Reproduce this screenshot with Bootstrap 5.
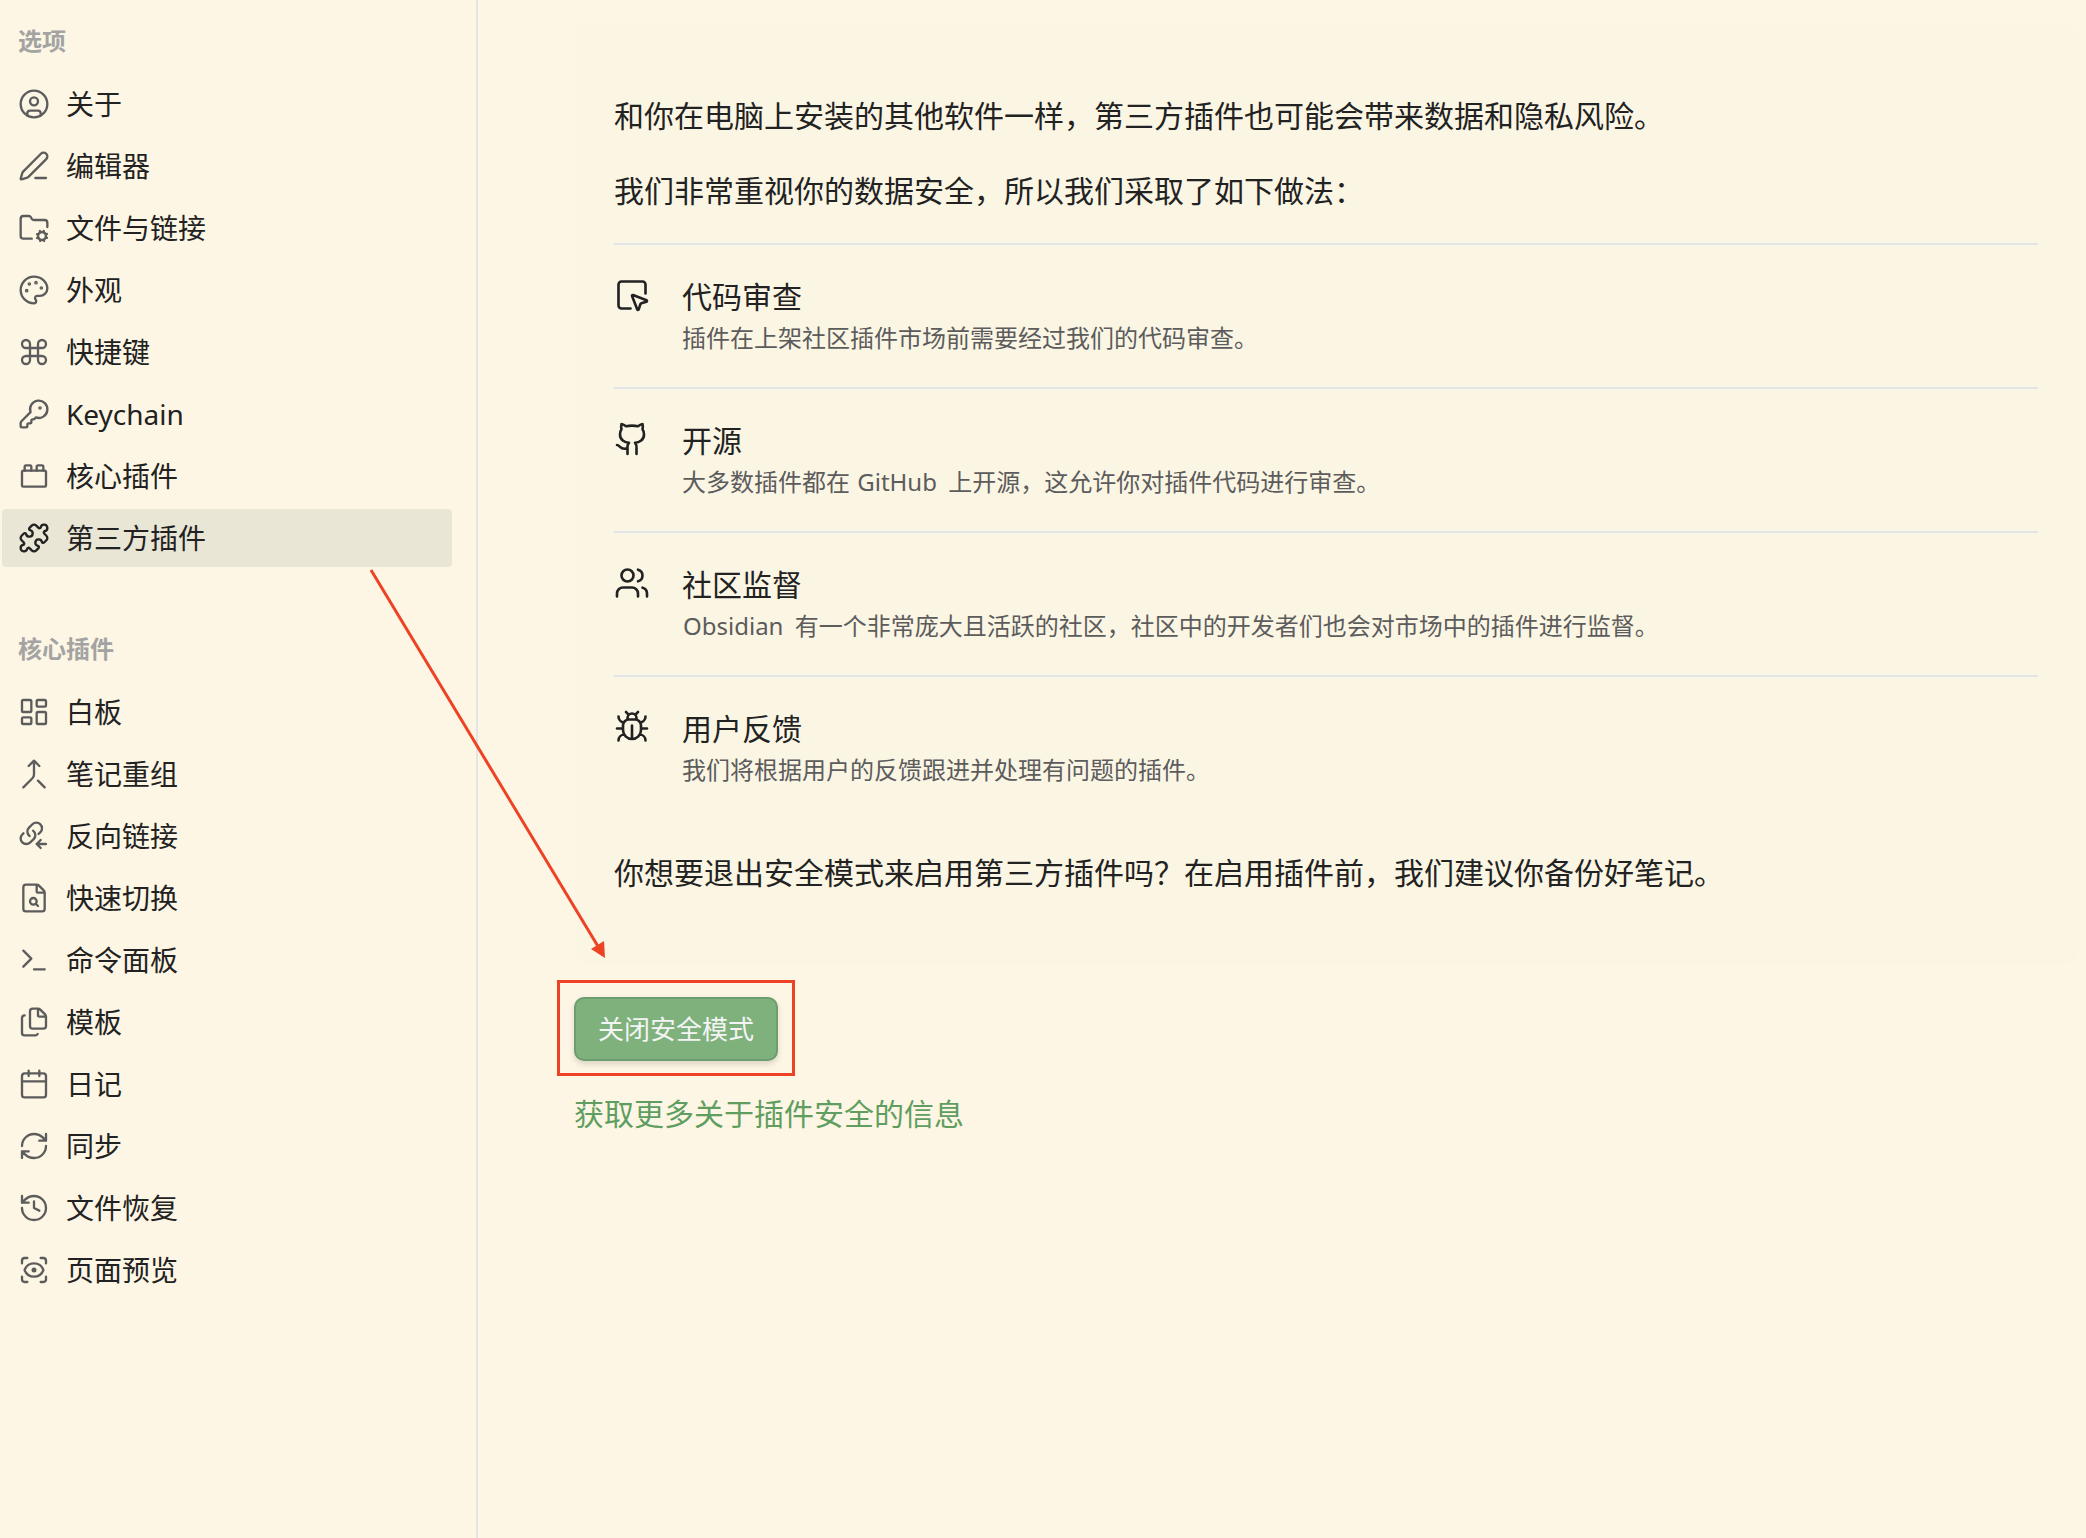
<!DOCTYPE html>
<html lang="zh-CN">
<head>
<meta charset="utf-8">
<meta name="viewport" content="width=device-width, initial-scale=1">
<title>第三方插件</title>
<link href="https://cdn.jsdelivr.net/npm/bootstrap@5.3.0/dist/css/bootstrap.min.css" rel="stylesheet">
<style>
  :root { --page: #fdf6e4; --panel: #fbf5e4; --line: #e2e4e6; --ink: #222; --soft: #5c5c5c; --faint: #a3a3a3; --mark: #ed4224; }
  body { background: var(--page); color: var(--ink); font-family: "Noto Sans", "Noto Sans CJK SC", sans-serif; font-size: 30px; line-height: 45px; }
  svg.ico { fill: none; stroke: currentColor; stroke-width: 1.75; stroke-linecap: round; stroke-linejoin: round; flex: none; width: 32px; height: 32px; }
  .side-pane { width: 478px; border-right: 2px solid var(--line); padding: 23px 24px 0 2px; }
  .side-title { font-size: 24px; line-height: 36px; font-weight: 700; color: var(--faint); margin: 0 0 16px; padding-left: 16px; }
  .side-group + .side-group { margin-top: 64px; }
  .side-item { font-size: 28px; line-height: 42px; padding: 8px 16px; gap: 16px; border-radius: 4px; color: var(--ink); }
  .side-item .ico { color: var(--soft); }
  .side-item.active { background: #e9e6d6; }
  .side-item.active .ico { color: var(--ink); }
  .main-pane { padding: 23px 8px 0 96px; }
  .notice { background: var(--panel); border-radius: 16px; padding: 70px 40px; }
  .notice > p { margin: 0 0 30px; }
  .notice > p:last-child { margin: 31px 0 0; }
  .measure { border-top: 2px solid var(--line); padding: 30px 0; gap: 32px; }
  .measure .ico { width: 36px; height: 36px; margin-top: 2px; }
  .measure h2 { font-size: 30px; line-height: 44px; font-weight: 400; margin: 0; }
  .measure p { font-size: 24px; line-height: 38px; color: var(--soft); margin: 0; }
  .latin { margin: 0 5px 0 1px; }
  .cta-wrap { margin-top: 32px; }
  .cta { font-size: 26px; line-height: 40px; padding: 10px 22px; border: 2px solid #6c9d6e; border-radius: 10px; background: #7fb17d; color: #f4f4f4; box-shadow: 0 3px 6px rgba(0,0,0,.14); }
  .cta:hover { background: #74a873; border-color: #6c9d6e; color: #fff; }
  .frame { inset: -17px -17px -15px; border: 3px solid var(--mark); pointer-events: none; }
  .more-link { color: #5f9e60; margin-top: 30px; }
  .arrow { left: 0; top: 0; pointer-events: none; }
</style>
</head>
<body>
<div class="d-flex min-vh-100 position-relative">
  <nav class="side-pane flex-shrink-0">
    <section class="side-group">
      <h6 class="side-title">选项</h6>
      <div class="d-flex flex-column gap-1">
        <a href="#" class="side-item d-flex align-items-center text-decoration-none"><svg class="ico" viewBox="0 0 24 24"><circle cx="12" cy="12" r="10"/><circle cx="12" cy="10" r="3"/><path d="M7 20.662V19a2 2 0 0 1 2-2h6a2 2 0 0 1 2 2v1.662"/></svg>关于</a>
        <a href="#" class="side-item d-flex align-items-center text-decoration-none"><svg class="ico" viewBox="0 0 24 24"><path d="M13 21h8M21.174 6.812a1 1 0 0 0-3.986-3.987L3.842 16.174a2 2 0 0 0-.5.83l-1.321 4.352a.5.5 0 0 0 .623.622l4.353-1.32a2 2 0 0 0 .83-.497z"/></svg>编辑器</a>
        <a href="#" class="side-item d-flex align-items-center text-decoration-none"><svg class="ico" viewBox="0 0 24 24"><circle cx="18" cy="18" r="3"/><path d="M10.3 20H4a2 2 0 0 1-2-2V5a2 2 0 0 1 2-2h3.98a2 2 0 0 1 1.69.9l.66 1.2A2 2 0 0 0 12 6h8a2 2 0 0 1 2 2v3.3M21.7 19.4l-.9-.3M15.2 16.9l-.9-.3M16.6 21.7l.3-.9M19.1 15.2l.3-.9M19.6 21.7l-.4-1M16.8 15.3l-.4-1M14.3 19.6l1-.4M20.7 16.8l1-.4"/></svg>文件与链接</a>
        <a href="#" class="side-item d-flex align-items-center text-decoration-none"><svg class="ico" viewBox="0 0 24 24"><g fill="currentColor"><circle cx="13.5" cy="6.5" r=".5"/><circle cx="17.5" cy="10.5" r=".5"/><circle cx="8.5" cy="7.5" r=".5"/><circle cx="6.5" cy="12.5" r=".5"/></g><path d="M12 2C6.5 2 2 6.5 2 12s4.5 10 10 10c.926 0 1.648-.746 1.648-1.688 0-.437-.18-.835-.437-1.125-.29-.289-.438-.652-.438-1.125a1.64 1.64 0 0 1 1.668-1.668h1.996c3.051 0 5.555-2.503 5.555-5.554C21.965 6.012 17.461 2 12 2z"/></svg>外观</a>
        <a href="#" class="side-item d-flex align-items-center text-decoration-none"><svg class="ico" viewBox="0 0 24 24"><path d="M15 6v12a3 3 0 1 0 3-3H6a3 3 0 1 0 3 3V6a3 3 0 1 0-3 3h12a3 3 0 1 0-3-3"/></svg>快捷键</a>
        <a href="#" class="side-item d-flex align-items-center text-decoration-none"><svg class="ico" viewBox="0 0 24 24"><path d="M2.586 17.414A2 2 0 0 0 2 18.828V21a1 1 0 0 0 1 1h3a1 1 0 0 0 1-1v-1a1 1 0 0 1 1-1h1a1 1 0 0 0 1-1v-1a1 1 0 0 1 1-1h.172a2 2 0 0 0 1.414-.586l.814-.814a6.5 6.5 0 1 0-4-4z"/><circle cx="16.5" cy="7.5" r=".5" fill="currentColor"/></svg>Keychain</a>
        <a href="#" class="side-item d-flex align-items-center text-decoration-none"><svg class="ico" viewBox="0 0 24 24"><rect x="3" y="8" width="18" height="12" rx="1"/><path d="M10 8V5c0-.6-.4-1-1-1H6a1 1 0 0 0-1 1v3M19 8V5c0-.6-.4-1-1-1h-3a1 1 0 0 0-1 1v3"/></svg>核心插件</a>
        <a href="#" class="side-item active d-flex align-items-center text-decoration-none" aria-current="page"><svg class="ico" viewBox="0 0 24 24"><path d="M15.39 4.39a1 1 0 0 0 1.68-.474 2.5 2.5 0 1 1 3.014 3.015 1 1 0 0 0-.474 1.68l1.683 1.682a2.414 2.414 0 0 1 0 3.414L19.61 15.39a1 1 0 0 1-1.68-.474 2.5 2.5 0 1 0-3.014 3.015 1 1 0 0 1 .474 1.68l-1.683 1.682a2.414 2.414 0 0 1-3.414 0L8.61 19.61a1 1 0 0 0-1.68.474 2.5 2.5 0 1 1-3.014-3.015 1 1 0 0 0 .474-1.68l-1.683-1.682a2.414 2.414 0 0 1 0-3.414L4.39 8.61a1 1 0 0 1 1.68.474 2.5 2.5 0 1 0 3.014-3.015 1 1 0 0 1-.474-1.68l1.683-1.682a2.414 2.414 0 0 1 3.414 0z"/></svg>第三方插件</a>
      </div>
    </section>
    <section class="side-group">
      <h6 class="side-title">核心插件</h6>
      <div class="d-flex flex-column gap-1">
        <a href="#" class="side-item d-flex align-items-center text-decoration-none"><svg class="ico" viewBox="0 0 24 24"><rect x="3" y="3" width="7" height="9" rx="1"/><rect x="14" y="3" width="7" height="5" rx="1"/><rect x="14" y="12" width="7" height="9" rx="1"/><rect x="3" y="16" width="7" height="5" rx="1"/></svg>白板</a>
        <a href="#" class="side-item d-flex align-items-center text-decoration-none"><svg class="ico" viewBox="0 0 24 24"><path d="m8 6 4-4 4 4M12 2v10.3a4 4 0 0 1-1.172 2.872L4 22M20 22l-5-5"/></svg>笔记重组</a>
        <a href="#" class="side-item d-flex align-items-center text-decoration-none"><svg class="ico" viewBox="0 0 24 24"><path d="M8.705 12A4.2 4.2 0 0 1 7.011 8.947 4.1 4.1 0 0 1 8.246 5.687L10.796 3.175A4.25 4.25 0 0 1 16.755 3.226 4.1 4.1 0 0 1 16.807 9.095L15.4 10.5M11.295 8A4.2 4.2 0 0 1 12.989 11.053 4.1 4.1 0 0 1 11.754 14.313L9.204 16.825A4.25 4.25 0 0 1 3.245 16.774 4.1 4.1 0 0 1 3.193 10.905L4.1 10M21 18h-7M17 15l-3 3 3 3"/></svg>反向链接</a>
        <a href="#" class="side-item d-flex align-items-center text-decoration-none"><svg class="ico" viewBox="0 0 24 24"><path d="M6 22a2 2 0 0 1-2-2V4a2 2 0 0 1 2-2h8a2.4 2.4 0 0 1 1.704.706l3.588 3.588A2.4 2.4 0 0 1 20 8v12a2 2 0 0 1-2 2zM14 2v5a1 1 0 0 0 1 1h5M13.3 16.3 15 18"/><circle cx="11.5" cy="14.5" r="2.5"/></svg>快速切换</a>
        <a href="#" class="side-item d-flex align-items-center text-decoration-none"><svg class="ico" viewBox="0 0 24 24"><path d="m4 17 6-6-6-6M12 19h8"/></svg>命令面板</a>
        <a href="#" class="side-item d-flex align-items-center text-decoration-none"><svg class="ico" viewBox="0 0 24 24"><path d="M15 2h-4a2 2 0 0 0-2 2v11a2 2 0 0 0 2 2h8a2 2 0 0 0 2-2V8M16.706 2.706A2.4 2.4 0 0 0 15 2v5a1 1 0 0 0 1 1h5a2.4 2.4 0 0 0-.706-1.706zM5 7a2 2 0 0 0-2 2v11a2 2 0 0 0 2 2h8a2 2 0 0 0 1.732-1"/></svg>模板</a>
        <a href="#" class="side-item d-flex align-items-center text-decoration-none"><svg class="ico" viewBox="0 0 24 24"><rect x="3" y="4" width="18" height="18" rx="2"/><path d="M8 2v4M16 2v4M3 10h18"/></svg>日记</a>
        <a href="#" class="side-item d-flex align-items-center text-decoration-none"><svg class="ico" viewBox="0 0 24 24"><path d="M3 12a9 9 0 0 1 9-9 9.75 9.75 0 0 1 6.74 2.74L21 8M21 3v5h-5M21 12a9 9 0 0 1-9 9 9.75 9.75 0 0 1-6.74-2.74L3 16M8 16H3v5"/></svg>同步</a>
        <a href="#" class="side-item d-flex align-items-center text-decoration-none"><svg class="ico" viewBox="0 0 24 24"><path d="M3 12a9 9 0 1 0 9-9 9.75 9.75 0 0 0-6.74 2.74L3 8M3 3v5h5M12 7v5l4 2"/></svg>文件恢复</a>
        <a href="#" class="side-item d-flex align-items-center text-decoration-none"><svg class="ico" viewBox="0 0 24 24"><path d="M3 7V5a2 2 0 0 1 2-2h2M17 3h2a2 2 0 0 1 2 2v2M21 17v2a2 2 0 0 1-2 2h-2M7 21H5a2 2 0 0 1-2-2v-2M18.944 12.33a1 1 0 0 0 0-.66 7.5 7.5 0 0 0-13.888 0 1 1 0 0 0 0 .66 7.5 7.5 0 0 0 13.888 0"/><circle cx="12" cy="12" r="1"/></svg>页面预览</a>
      </div>
    </section>
  </nav>

  <main class="main-pane flex-grow-1">
    <div class="notice">
      <p>和你在电脑上安装的其他软件一样，第三方插件也可能会带来数据和隐私风险。</p>
      <p>我们非常重视你的数据安全，所以我们采取了如下做法：</p>
      <div class="measure d-flex align-items-start">
        <svg class="ico" viewBox="0 0 24 24"><path d="M12.034 12.681a.498.498 0 0 1 .647-.647l9 3.5a.5.5 0 0 1-.033.943l-3.444 1.068a1 1 0 0 0-.66.66l-1.067 3.443a.5.5 0 0 1-.943.033zM21 11V5a2 2 0 0 0-2-2H5a2 2 0 0 0-2 2v14a2 2 0 0 0 2 2h6"/></svg>
        <div><h2>代码审查</h2><p>插件在上架社区插件市场前需要经过我们的代码审查。</p></div>
      </div>
      <div class="measure d-flex align-items-start">
        <svg class="ico" viewBox="0 0 24 24"><path d="M15 22v-4a4.8 4.8 0 0 0-1-3.5c3 0 6-2 6-5.5.08-1.25-.27-2.48-1-3.5.28-1.15.28-2.35 0-3.5 0 0-1 0-3 1.5-2.64-.5-5.36-.5-8 0C6 2 5 2 5 2c-.3 1.15-.3 2.35 0 3.5A5.403 5.403 0 0 0 4 9c0 3.5 3 5.5 6 5.5-.39.49-.68 1.05-.85 1.65-.17.6-.22 1.23-.15 1.85v4M9 18c-4.51 2-5-2-7-2"/></svg>
        <div><h2>开源</h2><p>大多数插件都在 <span class="latin">GitHub</span> 上开源，这允许你对插件代码进行审查。</p></div>
      </div>
      <div class="measure d-flex align-items-start">
        <svg class="ico" viewBox="0 0 24 24"><path d="M16 21v-2a4 4 0 0 0-4-4H6a4 4 0 0 0-4 4v2M16 3.128a4 4 0 0 1 0 7.744M22 21v-2a4 4 0 0 0-3-3.87"/><circle cx="9" cy="7" r="4"/></svg>
        <div><h2>社区监督</h2><p><span class="latin">Obsidian</span> 有一个非常庞大且活跃的社区，社区中的开发者们也会对市场中的插件进行监督。</p></div>
      </div>
      <div class="measure d-flex align-items-start">
        <svg class="ico" viewBox="0 0 24 24"><path d="M12 20v-9M14 7a4 4 0 0 1 4 4v3a6 6 0 0 1-12 0v-3a4 4 0 0 1 4-4zM14.12 3.88 16 2M21 21a4 4 0 0 0-3.81-4M21 5a4 4 0 0 1-3.55 3.97M22 13h-4M3 21a4 4 0 0 1 3.81-4M3 5a4 4 0 0 0 3.55 3.97M6 13H2M8 2l1.88 1.88M9 7.13V6a3 3 0 1 1 6 0v1.13"/></svg>
        <div><h2>用户反馈</h2><p>我们将根据用户的反馈跟进并处理有问题的插件。</p></div>
      </div>
      <p>你想要退出安全模式来启用第三方插件吗？在启用插件前，我们建议你备份好笔记。</p>
    </div>
    <div class="d-flex flex-column align-items-start">
      <div class="cta-wrap position-relative">
        <button type="button" class="btn cta d-block">关闭安全模式</button>
        <span class="frame position-absolute"></span>
      </div>
      <a href="#" class="more-link text-decoration-none">获取更多关于插件安全的信息</a>
    </div>
  </main>

  <svg class="arrow position-absolute" width="620" height="970" viewBox="0 0 620 970" aria-hidden="true"><path d="M371 570 599 948" stroke="#ed4224" stroke-width="3" fill="none"/><path d="M605 958 604 941 591 949Z" fill="#ed4224"/></svg>
</div>
<script src="https://cdn.jsdelivr.net/npm/bootstrap@5.3.0/dist/js/bootstrap.bundle.min.js"></script>
</body>
</html>
